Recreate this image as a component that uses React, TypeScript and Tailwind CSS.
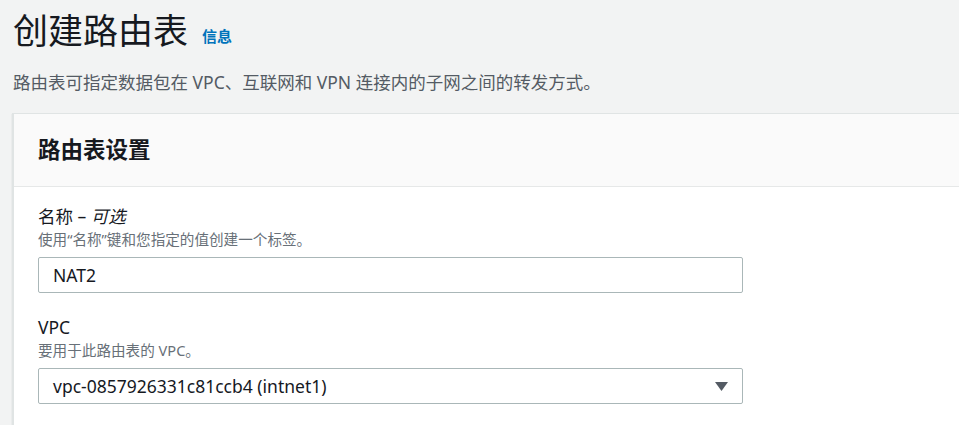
const font = { fontFamily: '"Noto Sans", "Noto Sans CJK SC", sans-serif' };

const Field = ({
  label,
  optional,
  hint,
  children,
}: {
  label: string;
  optional?: string;
  hint: string;
  children: React.ReactNode;
}) => (
  <div className="flex flex-col">
    <div className="text-[17.5px] leading-[20px] text-[#16191f]">
      {label}
      {optional && (
        <>
          {" – "}
          <i>{optional}</i>
        </>
      )}
    </div>
    <div className="mt-[4px] text-[14.6px] leading-[18px] text-[#687078]">{hint}</div>
    <div className="mt-[9px]">{children}</div>
  </div>
);

export default function App() {
  return (
    <div
      className="h-[425px] w-[959px] overflow-hidden bg-[#f2f3f3] pl-[12px]"
      style={font}
    >
      <div className="flex items-end pl-[1px] pt-[9px]">
        <h1 className="text-[35px] leading-[44px] text-[#16191f]">创建路由表</h1>
        <a className="mb-[8px] ml-[14px] text-[15px] font-bold leading-[18px] text-[#0073bb]">
          信息
        </a>
      </div>
      <p className="mt-[17px] pl-[1px] text-[17.5px] leading-[24px] text-[#545b64]">
        路由表可指定数据包在 VPC、互联网和 VPN 连接内的子网之间的转发方式。
      </p>

      <div className="mt-[19px] border-l-2 border-t border-[#e0e4e4] bg-white shadow-[0_1px_1px_0_rgba(0,28,36,0.2)]">
        <div className="flex h-[73px] items-center border-b border-[#e6e8e8] bg-[#fafafa] px-[24px]">
          <h2 className="text-[22.5px] font-bold text-[#16191f]">路由表设置</h2>
        </div>
        <div className="flex w-[753px] flex-col gap-[24px] px-[24px] pb-[40px] pt-[19px]">
          <Field label="名称" optional="可选" hint="使用“名称”键和您指定的值创建一个标签。">
            <div className="flex h-[36px] items-center rounded-[2px] border border-[#aab7b8] bg-white px-[14px] text-[17.5px] text-[#16191f]">
              NAT2
            </div>
          </Field>
          <Field label="VPC" hint="要用于此路由表的 VPC。">
            <div className="flex h-[36px] items-center justify-between rounded-[2px] border border-[#aab7b8] bg-white pl-[14px] pr-[14px] text-[17.5px] text-[#16191f]">
              <span>vpc-0857926331c81ccb4 (intnet1)</span>
              <svg width="13" height="9" viewBox="0 0 13 9">
                <path d="M0 0h13L6.5 9z" fill="#545b64" />
              </svg>
            </div>
          </Field>
        </div>
      </div>
    </div>
  );
}
